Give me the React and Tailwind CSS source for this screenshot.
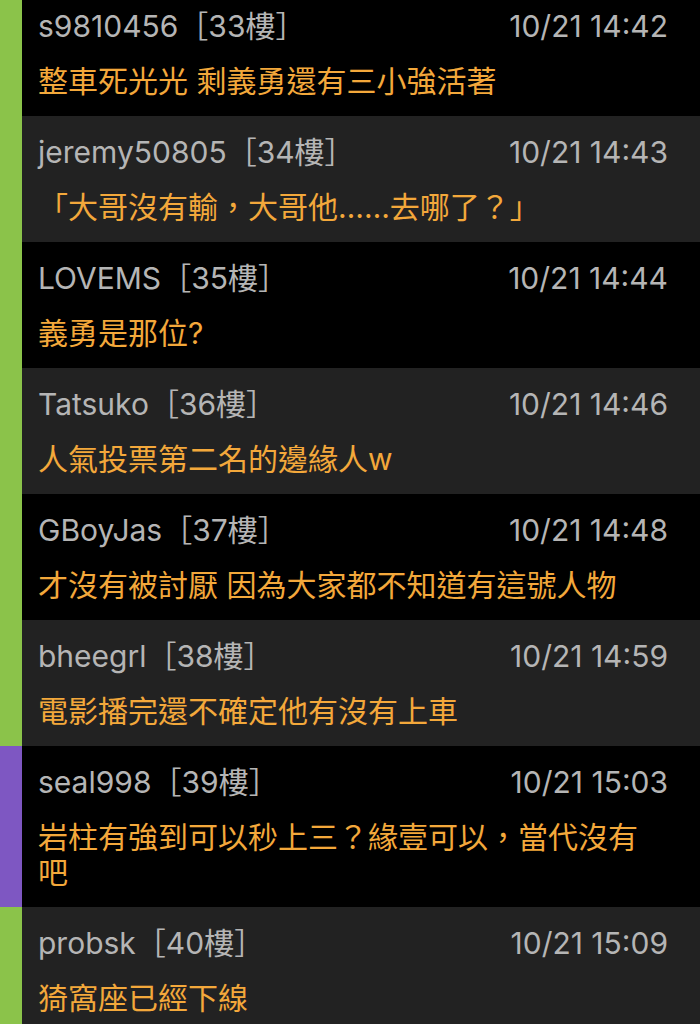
import React from "react";

const rows = [
  { user: "s9810456", floor: 33, time: "10/21 14:42", text: "整車死光光 剩義勇還有三小強活著", bar: "bg-[#8bc34a]", bg: "bg-black" },
  { user: "jeremy50805", floor: 34, time: "10/21 14:43", text: "「大哥沒有輸，大哥他……去哪了？」", bar: "bg-[#8bc34a]", bg: "bg-[#222222]" },
  { user: "LOVEMS", floor: 35, time: "10/21 14:44", text: "義勇是那位?", bar: "bg-[#8bc34a]", bg: "bg-black" },
  { user: "Tatsuko", floor: 36, time: "10/21 14:46", text: "人氣投票第二名的邊緣人w", bar: "bg-[#8bc34a]", bg: "bg-[#222222]" },
  { user: "GBoyJas", floor: 37, time: "10/21 14:48", text: "才沒有被討厭 因為大家都不知道有這號人物", bar: "bg-[#8bc34a]", bg: "bg-black" },
  { user: "bheegrl", floor: 38, time: "10/21 14:59", text: "電影播完還不確定他有沒有上車", bar: "bg-[#8bc34a]", bg: "bg-[#222222]" },
  { user: "seal998", floor: 39, time: "10/21 15:03", text: "岩柱有強到可以秒上三？緣壹可以，當代沒有吧", bar: "bg-[#7e57c2]", bg: "bg-black" },
  { user: "probsk", floor: 40, time: "10/21 15:09", text: "猗窩座已經下線", bar: "bg-[#8bc34a]", bg: "bg-[#222222]" },
];

const font = { fontFamily: 'Inter, "Noto Sans CJK TC", "Noto Sans CJK SC", sans-serif' };

export default function App() {
  return (
    <div className="w-[700px] h-[1024px] overflow-hidden bg-black" style={font}>
      <div className="flex flex-col -mt-[10px]">
        {rows.map((r) => (
          <div key={r.floor} className="flex">
            <div className={`w-[22px] shrink-0 ${r.bar}`} />
            <div className={`flex-1 ${r.bg} pl-[16px] pr-[32px] pt-[18px] pb-[17px]`}>
              <div className="flex justify-between items-center h-[36px] text-[30px] leading-[36px] text-[#b5b5b5]">
                <span>{r.user}［{r.floor}樓］</span>
                <span>{r.time}</span>
              </div>
              <div className="mt-[20px] mr-[6px] text-[30px] leading-[35px] text-[#f3a83b]">{r.text}</div>
            </div>
          </div>
        ))}
      </div>
    </div>
  );
}
